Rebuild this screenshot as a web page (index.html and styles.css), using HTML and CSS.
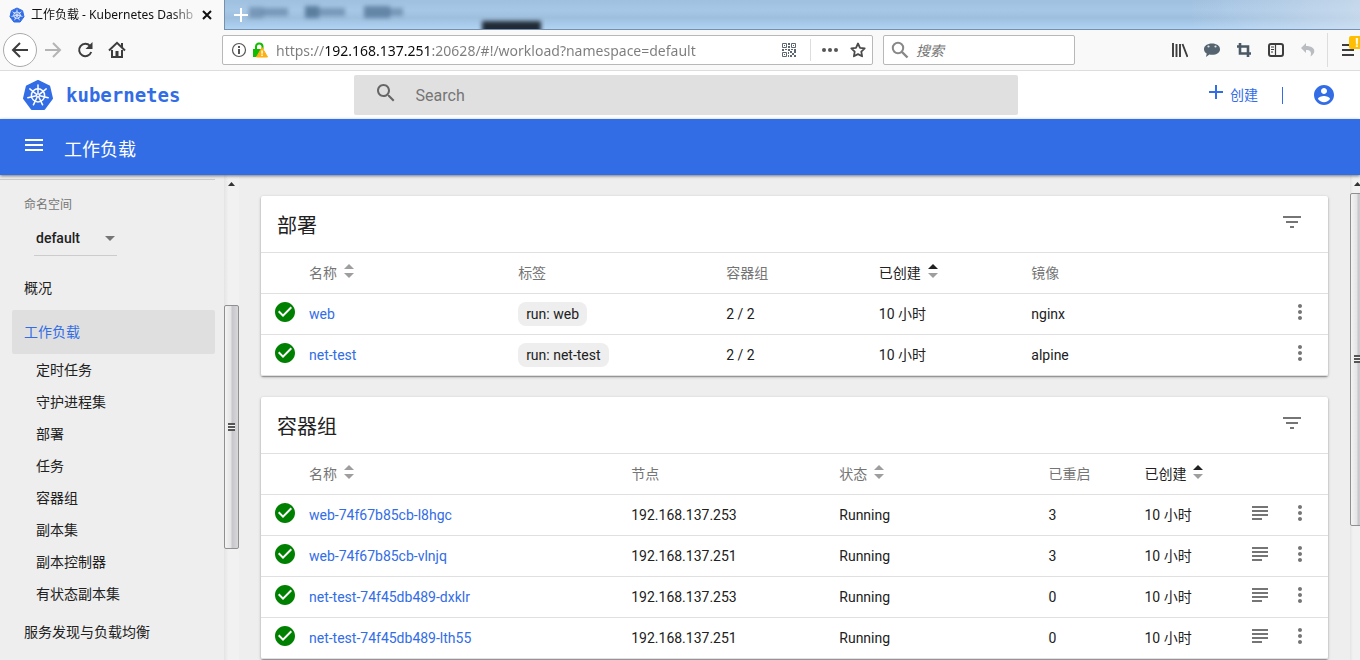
FILE: index.html
```html
<!DOCTYPE html>
<html lang="zh-CN">
<head>
<meta charset="utf-8">
<title>工作负载 - Kubernetes Dashboard</title>
<link rel="stylesheet" href="styles.css">
</head>
<body>
<svg class="defs" aria-hidden="true">
  <symbol id="k8s" viewBox="0 0 32 32">
    <path fill="#326de6" stroke="#326de6" stroke-width="2" stroke-linejoin="round" d="M16 2 27.200 7.400 30 19.500 22.200 30H9.800L2 19.500 4.800 7.400Z"/>
    <g fill="none" stroke="#fff" stroke-width="1.500" stroke-linecap="round">
      <circle cx="16" cy="16.400" r="6.600"/>
      <path d="M16 14.600V5.900M17.400 15.300l6.800-5.400M17.800 16.800l8.400 1.900M16.800 18l3.800 7.800M15.200 18l-3.800 7.800M14.200 16.800l-8.400 1.900M14.600 15.300 7.800 9.900"/>
    </g>
    <circle cx="16" cy="16.400" r="1.900" fill="#fff"/><circle cx="16" cy="16.400" r=".8" fill="#326de6"/>
  </symbol>
  <symbol id="ok" viewBox="0 0 24 24"><path d="M12 2C6.480 2 2 6.480 2 12s4.480 10 10 10 10-4.480 10-10S17.520 2 12 2zm-2 15l-5-5 1.410-1.410L10 14.170l7.590-7.590L19 8l-9 9z"/></symbol>
  <symbol id="more" viewBox="0 0 24 24"><path d="M12 8c1.100 0 2-.9 2-2s-.9-2-2-2-2 .9-2 2 .9 2 2 2zm0 2c-1.100 0-2 .9-2 2s.9 2 2 2 2-.9 2-2-.9-2-2-2zm0 6c-1.100 0-2 .9-2 2s.9 2 2 2 2-.9 2-2-.9-2-2-2z"/></symbol>
  <symbol id="filter" viewBox="0 0 24 24"><path d="M10 18h4v-2h-4v2zM3 6v2h18V6H3zm3 7h12v-2H6v2z"/></symbol>
  <symbol id="logs" viewBox="0 0 24 24"><path d="M14 17H4v2h10v-2zm6-8H4v2h16V9zM4 15h16v-2H4v2zM4 5v2h16V5H4z"/></symbol>
  <symbol id="find" viewBox="0 0 24 24"><path d="M15.500 14h-.79l-.28-.27C15.410 12.590 16 11.110 16 9.500 16 5.910 13.090 3 9.500 3S3 5.910 3 9.500 5.910 16 9.500 16c1.610 0 3.090-.59 4.230-1.570l.27.28v.79l5 4.990L20.490 19l-4.990-5zm-6 0C7.010 14 5 11.990 5 9.500S7.010 5 9.500 5 14 7.010 14 9.500 11.990 14 9.500 14z"/></symbol>
  <symbol id="sort" viewBox="0 0 10 14"><path class="up" d="M0 5 5 0l5 5z"/><path class="down" d="M0 9h10l-5 5z"/></symbol>
</svg>

<div class="tabs">
  <div class="tab">
    <svg class="i16"><use href="#k8s"/></svg>
    <span class="tab-title">工作负载 - Kubernetes Dashb</span>
    <button class="bare" aria-label="关闭标签页"><svg class="i10" viewBox="0 0 10 10"><path d="m1 1 8 8M9 1 1 9" stroke="#111" stroke-width="2"/></svg></button>
  </div>
  <div class="glass">
    <button class="bare" aria-label="新建标签页"><svg class="i14" viewBox="0 0 14 14"><path d="M7 0v14M0 7h14" stroke="#fff" stroke-width="2"/></svg></button>
    <svg class="ghost" aria-hidden="true" viewBox="0 0 320 30">
      <g class="soft" fill="#496b8d">
        <rect x="24" y="7" width="14" height="11" opacity=".5"/><rect x="37" y="8" width="26" height="8" opacity=".5"/>
        <rect x="80" y="6" width="14" height="12" opacity=".8"/><rect x="94" y="8" width="26" height="8" opacity=".5"/>
        <rect x="139" y="6" width="26" height="12" opacity=".7"/><rect x="164" y="8" width="14" height="8" opacity=".5"/>
      </g>
      <rect class="soft" x="257" y="21" width="59" height="16" fill="#202b36"/>
    </svg>
  </div>
</div>

<div class="toolbar">
  <div class="nav">
    <button class="bare back" aria-label="后退"><svg class="i18" viewBox="0 0 18 18"><path d="M17 9H2M9 2 2 9l7 7" fill="none" stroke="#3d3d3d" stroke-width="2"/></svg></button>
    <button class="bare" aria-label="前进"><svg class="i18" viewBox="0 0 18 18"><path d="M1 9h15M9 2l7 7-7 7" fill="none" stroke="#b4b4b4" stroke-width="2"/></svg></button>
    <button class="bare" aria-label="刷新"><svg class="i18" viewBox="0 0 18 18"><path d="M14 4.800A6.200 6.200 0 1 0 15.200 11" fill="none" stroke="#3d3d3d" stroke-width="2"/><path d="M16.500 1v7h-7z" fill="#3d3d3d"/></svg></button>
    <button class="bare" aria-label="主页"><svg class="i18" viewBox="0 0 18 18"><path d="M1 9.500 9 1.800l8 7.700" fill="none" stroke="#3d3d3d" stroke-width="2"/><path d="M4 9v7h10V9" fill="none" stroke="#3d3d3d" stroke-width="2"/><path d="M7.500 10h3v6h-3zM13 2h2v5l-2-2z" fill="#3d3d3d"/></svg></button>
  </div>
  <div class="field url">
    <svg class="i16" viewBox="0 0 16 16"><circle cx="8" cy="8" r="6.500" fill="none" stroke="#555" stroke-width="1.200"/><path d="M7 7h2v5H7zM7 4h2v2H7z" fill="#555"/></svg>
    <svg class="i16" viewBox="0 0 16 16"><path d="M4 8V4.500a3.300 3.300 0 0 1 6.500-.5v3" fill="none" stroke="#12bc00" stroke-width="2"/><path d="M1 7h9v8H1z" fill="#12bc00"/><path d="M10 5.500 15.500 15h-11z" fill="#ffaf0f" stroke="#ffaf0f" stroke-linejoin="round"/><path d="M9.300 8.500h1.500v3.300H9.300zM9.300 12.600h1.500V14H9.300z" fill="#fff"/></svg>
    <input class="address" type="text" aria-label="地址" value="https://192.168.137.251:20628/#!/workload?namespace=default">
    <button class="bare" aria-label="二维码"><svg class="i14" viewBox="0 0 14 14"><path d="M.5.500h4v4h-4zM9.500.500h4v4h-4zM.5 9.500h4v4h-4z" fill="none" stroke="#5b6670"/><path d="M2 2h1v1H2zM11 2h1v1h-1zM2 11h1v1H2zM6 0h2v2H6zM6 3h2v2H6zM0 6h2v2H0zM3 6h2v1H3zM6 6h2v2H6zM9 6h2v1H9zM12 6h2v2h-2zM6 9h1v2H6zM8 8h2v2H8zM10 10h2v2h-2zM12 8h2v2h-2zM8 12h2v2H8zM12 12h2v2h-2zM6 12h1v2H6z" fill="#5b6670"/></svg></button>
    <span class="rule"></span>
    <button class="bare" aria-label="页面操作"><svg class="i16" viewBox="0 0 16 16" fill="#555"><circle cx="2" cy="8" r="2"/><circle cx="8" cy="8" r="2"/><circle cx="14" cy="8" r="2"/></svg></button>
    <button class="bare" aria-label="收藏"><svg class="i16" viewBox="0 0 16 16"><path d="m8 1.500 2 4.300 4.700.6-3.400 3.200.8 4.700L8 12.100l-4.100 2.200.8-4.700L1.300 6.400 6 5.800z" fill="none" stroke="#4a4a4a" stroke-width="1.800" stroke-linejoin="round"/></svg></button>
  </div>
  <div class="field find">
    <svg class="i18" viewBox="0 0 18 18"><circle cx="7" cy="7" r="5.200" fill="none" stroke="#888" stroke-width="2"/><path d="m11 11 5.500 5.500" stroke="#888" stroke-width="2.400"/></svg>
    <input class="find-text" type="text" aria-label="搜索" placeholder="搜索">
  </div>
  <div class="tools">
    <button class="bare" aria-label="书库"><svg class="i16" viewBox="0 0 16 16"><path d="M1 1v14M4.500 2v13M8 2v13M10.500 2l5 13" stroke="#3d3d3d" stroke-width="1.900"/></svg></button>
    <button class="bare" aria-label="消息"><svg class="i16" viewBox="0 0 16 16"><path d="M8 1.500c4.700 0 8 2.300 8 5.700s-3.300 5.600-8 5.600c-1 0-1.800 0-2.600-.3L2 15l.7-3.500C1 10.500 0 9 0 7.200c0-3.400 3.300-5.700 8-5.700z" fill="#566370"/><circle cx="4.500" cy="4.500" r="1.100" fill="#dce3e8"/><circle cx="11.500" cy="4.500" r="1.100" fill="#dce3e8"/></svg></button>
    <button class="bare" aria-label="截图"><svg class="i16" viewBox="0 0 16 16"><path d="M4 1v10.500h11M1 4.500h11V15" fill="none" stroke="#4b5965" stroke-width="2.600"/></svg></button>
    <button class="bare" aria-label="侧栏"><svg class="i16" viewBox="0 0 16 16"><rect x="1" y="2" width="14" height="12" rx="2" fill="none" stroke="#3d3d3d" stroke-width="2"/><path d="M7.500 2v12M3 5h3M3 7.500h3M3 10h2" stroke="#3d3d3d" stroke-width="1.200"/></svg></button>
    <button class="bare" aria-label="撤销"><svg class="i16" viewBox="0 0 16 16"><path d="M6 1 1 6l5 5V8c4-.5 6 1.500 4.500 6.500C17 10 15 4 6 4z" fill="#b9bdc1"/></svg></button>
  </div>
  <button class="bare menu" aria-label="菜单"><svg class="i16" viewBox="0 0 16 16"><path d="M2 3h12M2 8h12M2 13h12" stroke="#3d3d3d" stroke-width="2"/></svg><span class="badge">!</span></button>
</div>

<header class="brandbar">
  <a class="brand" href="#"><svg class="i32"><use href="#k8s"/></svg><span>kubernetes</span></a>
  <label class="search"><svg class="i24"><use href="#find"/></svg><input type="text" placeholder="Search" aria-label="Search"></label>
  <div class="actions">
    <button class="bare create"><svg class="i24" viewBox="0 0 24 24"><path d="M19 13h-6v6h-2v-6H5v-2h6V5h2v6h6v2z"/></svg><span>创建</span></button>
    <span class="bar"></span>
    <button class="bare" aria-label="用户"><svg class="i24" viewBox="0 0 24 24"><path d="M12 2C6.480 2 2 6.480 2 12s4.480 10 10 10 10-4.480 10-10S17.520 2 12 2zm0 3c1.660 0 3 1.340 3 3s-1.340 3-3 3-3-1.340-3-3 1.340-3 3-3zm0 14.200c-2.500 0-4.710-1.280-6-3.220.03-1.990 4-3.080 6-3.080 1.990 0 5.970 1.090 6 3.080-1.290 1.940-3.500 3.220-6 3.220z"/></svg></button>
  </div>
</header>

<div class="titlebar">
  <button class="bare" aria-label="导航菜单"><svg class="i24" viewBox="0 0 24 24"><path d="M3 18h18v-2H3v2zm0-5h18v-2H3v2zm0-7v2h18V6H3z"/></svg></button>
  <h1>工作负载</h1>
</div>

<div class="body">
  <nav class="side">
    <div class="namespace">
      <label for="ns">命名空间</label>
      <div class="picker"><select id="ns"><option>default</option></select><svg viewBox="0 0 10 5" aria-hidden="true"><path d="M0 0h10L5 5z"/></svg></div>
    </div>
    <a class="item" href="#">概况</a>
    <a class="item active" href="#">工作负载</a>
    <a class="sub" href="#">定时任务</a>
    <a class="sub" href="#">守护进程集</a>
    <a class="sub" href="#">部署</a>
    <a class="sub" href="#">任务</a>
    <a class="sub" href="#">容器组</a>
    <a class="sub" href="#">副本集</a>
    <a class="sub" href="#">副本控制器</a>
    <a class="sub" href="#">有状态副本集</a>
    <a class="item" href="#">服务发现与负载均衡</a>
  </nav>
  <div class="scroll side-scroll" aria-hidden="true">
    <svg class="arrow" viewBox="0 0 7 4"><path d="M0 4 3.500 0 7 4z"/></svg>
    <div class="thumb"><span class="grip"></span></div>
  </div>
  <main class="content">
    <section class="card">
      <div class="card-head"><h2>部署</h2><button class="bare" aria-label="筛选"><svg class="i24"><use href="#filter"/></svg></button></div>
      <table>
        <colgroup><col class="c-icon"><col class="c-name"><col class="c-wide"><col class="c-mid"><col class="c-mid"><col><col class="c-icon"></colgroup>
        <thead><tr><th></th><th>名称<svg class="sort"><use href="#sort"/></svg></th><th>标签</th><th>容器组</th><th class="sorted">已创建<svg class="sort"><use href="#sort"/></svg></th><th>镜像</th><th></th></tr></thead>
        <tbody>
          <tr><td class="ic"><svg class="i24 ok"><use href="#ok"/></svg></td><td><a href="#">web</a></td><td><span class="chip">run: web</span></td><td>2 / 2</td><td>10 小时</td><td>nginx</td><td class="ic act"><button class="bare" aria-label="操作"><svg class="i24"><use href="#more"/></svg></button></td></tr>
          <tr><td class="ic"><svg class="i24 ok"><use href="#ok"/></svg></td><td><a href="#">net-test</a></td><td><span class="chip">run: net-test</span></td><td>2 / 2</td><td>10 小时</td><td>alpine</td><td class="ic act"><button class="bare" aria-label="操作"><svg class="i24"><use href="#more"/></svg></button></td></tr>
        </tbody>
      </table>
    </section>
    <section class="card">
      <div class="card-head"><h2>容器组</h2><button class="bare" aria-label="筛选"><svg class="i24"><use href="#filter"/></svg></button></div>
      <table>
        <colgroup><col class="c-icon"><col class="c-pod"><col class="c-wide"><col class="c-name"><col class="c-small"><col><col class="c-logs"><col class="c-icon"></colgroup>
        <thead><tr><th></th><th>名称<svg class="sort"><use href="#sort"/></svg></th><th>节点</th><th>状态<svg class="sort"><use href="#sort"/></svg></th><th>已重启</th><th class="sorted">已创建<svg class="sort"><use href="#sort"/></svg></th><th></th><th></th></tr></thead>
        <tbody>
          <tr><td class="ic"><svg class="i24 ok"><use href="#ok"/></svg></td><td><a href="#">web-74f67b85cb-l8hgc</a></td><td>192.168.137.253</td><td>Running</td><td>3</td><td>10 小时</td><td class="ic"><button class="bare" aria-label="日志"><svg class="i24"><use href="#logs"/></svg></button></td><td class="ic act"><button class="bare" aria-label="操作"><svg class="i24"><use href="#more"/></svg></button></td></tr>
          <tr><td class="ic"><svg class="i24 ok"><use href="#ok"/></svg></td><td><a href="#">web-74f67b85cb-vlnjq</a></td><td>192.168.137.251</td><td>Running</td><td>3</td><td>10 小时</td><td class="ic"><button class="bare" aria-label="日志"><svg class="i24"><use href="#logs"/></svg></button></td><td class="ic act"><button class="bare" aria-label="操作"><svg class="i24"><use href="#more"/></svg></button></td></tr>
          <tr><td class="ic"><svg class="i24 ok"><use href="#ok"/></svg></td><td><a href="#">net-test-74f45db489-dxklr</a></td><td>192.168.137.253</td><td>Running</td><td>0</td><td>10 小时</td><td class="ic"><button class="bare" aria-label="日志"><svg class="i24"><use href="#logs"/></svg></button></td><td class="ic act"><button class="bare" aria-label="操作"><svg class="i24"><use href="#more"/></svg></button></td></tr>
          <tr><td class="ic"><svg class="i24 ok"><use href="#ok"/></svg></td><td><a href="#">net-test-74f45db489-lth55</a></td><td>192.168.137.251</td><td>Running</td><td>0</td><td>10 小时</td><td class="ic"><button class="bare" aria-label="日志"><svg class="i24"><use href="#logs"/></svg></button></td><td class="ic act"><button class="bare" aria-label="操作"><svg class="i24"><use href="#more"/></svg></button></td></tr>
        </tbody>
      </table>
    </section>
  </main>
  <div class="scroll page-scroll" aria-hidden="true">
    <svg class="arrow" viewBox="0 0 7 4"><path d="M0 4 3.500 0 7 4z"/></svg>
    <div class="thumb"><span class="grip"></span></div>
  </div>
</div>
</body>
</html>
```

FILE: styles.css
```css
* { box-sizing: border-box; }

body {
  margin: 0;
  height: 100vh;
  display: flex;
  flex-direction: column;
  overflow: hidden;
  background: #eee;
  color: #212121;
  font: 14px/20px Roboto, "Noto Sans CJK SC", sans-serif;
}

a { color: #326de6; text-decoration: none; }
svg { display: block; flex: none; }
input, select { font: inherit; border: 0; outline: 0; padding: 0; background: none; min-width: 0; }
.bare { border: 0; padding: 0; background: none; font: inherit; color: inherit; display: flex; align-items: center; justify-content: center; flex: none; }
.defs { position: absolute; width: 0; height: 0; }

.i10 { width: 10px; height: 10px; }
.i14 { width: 14px; height: 14px; }
.i16 { width: 16px; height: 16px; }
.i18 { width: 18px; height: 18px; }
.i24 { width: 24px; height: 24px; fill: currentColor; }
.i32 { width: 32px; height: 32px; }

/* Browser tabs */
.tabs { display: flex; height: 30px; flex: none; background: #f9f9f9; }
.tab { width: 224px; display: flex; align-items: center; gap: 6px; padding: 0 12px 0 9px; color: #111; font: 12px/20px "Noto Sans", "Noto Sans CJK SC", sans-serif; }
.tab-title { flex: 1; white-space: nowrap; -webkit-mask-image: linear-gradient(90deg, #000 85%, rgba(0, 0, 0, .2)); mask-image: linear-gradient(90deg, #000 85%, rgba(0, 0, 0, .2)); }
.glass {
  flex: 1;
  display: flex;
  align-items: center;
  padding-left: 9px;
  position: relative;
  overflow: hidden;
  border-left: 1px solid #7791ab;
  border-bottom: 1px solid #7590ae;
  background: linear-gradient(90deg, transparent 85%, rgba(220, 230, 242, .6)), linear-gradient(#a0c0df, #a7c7e6 35%, #9fbfde 62%, #b0d3f4);
}
.glass .bare { position: relative; z-index: 1; }
.ghost { position: absolute; left: 0; top: 0; width: 320px; height: 30px; }
.soft { filter: blur(2px); }

/* Browser toolbar */
.toolbar { display: flex; align-items: center; height: 41px; flex: none; background: #f9f9f9; border-bottom: 1px solid #ddd; }
.nav { width: 222px; display: flex; align-items: center; padding-left: 3px; }
.nav .bare { width: 32px; height: 34px; }
.nav .back { width: 34px; border: 1px solid #aaa; border-radius: 50%; background: #fff; }
.field { height: 30px; display: flex; align-items: center; background: #fff; border: 1px solid #b8b8b8; border-radius: 2px; color: #7c7c7c; font-family: "Noto Sans", "Noto Sans CJK SC", sans-serif; }
.field input { padding-top: 2px; }
.url { flex: 1; gap: 5px; padding: 0 6px 0 8px; }
.address {
  flex: 1;
  margin-left: 3px;
  color: transparent;
  background: linear-gradient(90deg, #7c7c7c 50px, #0c0c0d 50px 156px, #7c7c7c 156px);
  -webkit-background-clip: text;
  background-clip: text;
}
.rule { width: 1px; height: 22px; background: #ddd; margin: 0 6px 0 9px; }
.url .bare + .bare { margin-left: 7px; }
.find { width: 192px; margin-left: 10px; padding-left: 7px; gap: 7px; }
.find-text { flex: 1; font-style: italic; }
.find-text::placeholder { color: #757575; opacity: 1; }
.tools { display: flex; gap: 16px; margin: 0 11px 0 97px; }
.menu { width: 33px; height: 34px; border-left: 1px solid #ddd; position: relative; padding-left: 8px; }
.badge { position: absolute; right: -5px; top: 3px; width: 16px; height: 13px; background: #ffbf00; color: #fff; font: bold 13px/13px Roboto, sans-serif; border-radius: 2px; }

/* Dashboard header */
.brandbar { display: flex; align-items: center; height: 48px; flex: none; background: #fff; color: #326de6; }
.brand { width: 26%; display: flex; align-items: center; gap: 12px; padding-left: 22px; font: bold 19px/24px "DejaVu Sans Mono", monospace; }
.search { width: 664px; flex: 0 1 auto; height: 40px; display: flex; align-items: center; gap: 18px; padding: 0 20px; background: #e0e0e0; border-radius: 2px; color: #666; font-size: 16px; }
.search .i24 { margin-bottom: 4px; }
.search input { flex: 1; color: #666; padding-top: 2px; }
.search input::placeholder { color: #757575; opacity: 1; }
.actions { margin-left: auto; display: flex; align-items: center; padding-right: 24px; }
.create { gap: 2px; }
.create .i24 { margin-bottom: 7px; }
.bar { width: 1px; height: 17px; margin: 0 29px 0 24px; background: #326de6; }

.titlebar { display: flex; align-items: center; gap: 18px; height: 56px; flex: none; padding-left: 22px; background: #326de6; color: #fff; position: relative; z-index: 1; box-shadow: 0 1px 3px rgba(0, 0, 0, .5); }
.titlebar .bare { margin-bottom: 4px; }
h1 { margin: 6px 0 0; font-size: 18px; font-weight: 400; line-height: 24px; }

/* Sidebar */
.body { flex: 1; min-height: 0; display: flex; }
.side { width: 224px; flex: none; overflow: hidden; padding: 4px 9px 0 0; }
.side a { display: block; color: #212121; }
.side a.active { color: #326de6; }
.namespace { border-top: 1px solid #ccc; height: 87px; padding: 15px 24px 0; }
.namespace label { display: block; font-size: 12px; color: #757575; }
.picker { position: relative; width: 83px; margin: 6px 0 0 10px; border-bottom: 1px solid #ccc; }
.picker select { appearance: none; width: 100%; height: 34px; padding-left: 2px; font-weight: 500; color: #212121; }
.picker svg { position: absolute; right: 2px; top: 15px; width: 10px; height: 5px; fill: #757575; pointer-events: none; }
.side .item { margin-left: 12px; padding: 12px; height: 44px; border-radius: 2px; }
.side .active { background: #dfdfdf; }
.side .sub { padding: 6px 0 6px 36px; }

/* Scroll bars */
.scroll { flex: none; display: flex; flex-direction: column; align-items: center; background: linear-gradient(90deg, #e4e4e4, #f1f1f1 30%, #f1f1f1); overflow: hidden; }
.scroll::after { content: ""; }
.side-scroll { width: 15px; }
.page-scroll { width: 10px; align-items: flex-start; }
.arrow { width: 7px; height: 4px; margin: 7px 0 8px; fill: #333; }
.page-scroll .arrow { margin-left: 4px; margin-bottom: 7px; }
.thumb { width: 15px; flex: none; display: flex; align-items: center; justify-content: center; border: 1px solid #8f8f8f; border-radius: 2px; background: linear-gradient(90deg, #f4f4f4, #e4e4e6 45%, #c6c6cb 55%, #d8d8dc); }
.side-scroll .thumb { flex: 244 0 0; }
.side-scroll::before { content: ""; flex: 111 0 0; order: 1; }
.side-scroll .thumb { order: 2; }
.side-scroll::after { flex: 111 0 0; order: 3; }
.page-scroll .thumb { flex: 332 0 0; }
.page-scroll::after { flex: 135 0 0; }
.grip { width: 7px; height: 8px; background: repeating-linear-gradient(#555 0 2px, #f5f5f5 2px 3px); }

/* Cards */
.content { flex: 1; min-width: 0; overflow: hidden; padding: 21px 22px; display: flex; flex-direction: column; gap: 21px; }
.card { flex: none; background: #fff; border-radius: 2px; box-shadow: 0 1px 3px rgba(0, 0, 0, .3), 0 1px 1px rgba(0, 0, 0, .25); }
.card-head { display: flex; align-items: center; justify-content: space-between; height: 56px; padding: 0 24px 0 16px; }
.card-head .bare { color: #757575; margin-bottom: 4px; }
h2 { margin: 4px 0 0; font-size: 20px; font-weight: 400; line-height: 28px; }
table { width: 100%; table-layout: fixed; border-collapse: separate; border-spacing: 0; }
th, td { height: 41px; padding: 0; border-top: 1px solid #e0e0e0; text-align: left; font-weight: 400; white-space: nowrap; }
tbody tr:last-child td { border-bottom: 1px solid #e0e0e0; height: 42px; }
th { color: #757575; }
.sort { display: inline-block; width: 10px; height: 14px; margin-left: 7px; fill: #9e9e9e; }
.sorted { color: #212121; --up: #212121; }
.up { fill: var(--up, #9e9e9e); }
.ic { padding: 0 0 4px 12px; color: #757575; }
.ic .bare { width: 24px; margin: 0; }
.ic:not(:first-child) { padding-left: 8px; }
.ok { color: #008000; }
.chip { display: inline-block; padding: 2px 8px; background: #eee; border-radius: 8px; }
.c-icon { width: 48px; }
.c-logs { width: 40px; }
.c-name { width: 19.6%; }
.c-wide { width: 19.5%; }
.c-mid { width: 14.3%; }
.c-pod { width: 30.2%; }
.c-small { width: 9%; }
```
